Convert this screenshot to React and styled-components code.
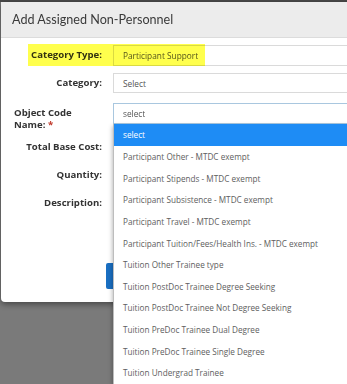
import React from 'react'
import styled, { createGlobalStyle } from 'styled-components'

const GlobalStyle = createGlobalStyle`
  html, body {
    margin: 0;
    padding: 0;
    width: 347px;
    height: 384px;
    overflow: hidden;
    background: #7a7a7a;
    font-family: "Open Sans", "Liberation Sans", sans-serif;
  }
`

const Page = styled.div`
  height: 384px;
  border-top: 2px solid #4a4a4a;
  box-sizing: border-box;
  padding-left: 1px;
`

const Modal = styled.div`
  width: 380px;
  height: 300px;
  background: #fff;
  border-radius: 0 0 4px 4px;
  box-shadow: 0 2px 6px rgba(0, 0, 0, 0.45);
`

const Header = styled.div`
  height: 36px;
  background: #ececec;
  border-bottom: 1px solid #dcdcdc;
  display: flex;
  align-items: center;
  padding-left: 11px;
  font-family: "Lato", "Liberation Sans", sans-serif;
  font-size: 12.6px;
  color: #3a3a3a;
  box-sizing: border-box;
`

const Body = styled.div`
  padding: 6px 0 0 13px;
  display: flex;
  flex-direction: column;
`

const Row = styled.div`
  position: relative;
  display: flex;
  align-items: ${p => (p.top ? 'flex-start' : 'center')};
  gap: 11px;
  height: ${p => p.h}px;
  margin-bottom: ${p => p.mb}px;
`

const Highlight = styled.div`
  position: absolute;
  left: 14px;
  top: 0;
  width: 177px;
  height: 22px;
  background: #ffff4d;
  mix-blend-mode: multiply;
  pointer-events: none;
`

const Label = styled.div`
  width: 88px;
  flex: none;
  text-align: ${p => (p.left ? 'left' : 'right')};
  font-weight: 700;
  font-size: 9.6px;
  line-height: 11.5px;
  color: #333;
  margin-top: ${p => (p.left ? 4 : 0)}px;
`

const Required = styled.span`
  color: #c0392b;
`

const Field = styled.div`
  position: relative;
  flex: 1;
  align-self: ${p => (p.top ? 'flex-start' : 'center')};
`

const Input = styled.div`
  height: ${p => p.h}px;
  border: 1px solid ${p => (p.focus ? '#a9c7df' : '#dadada')};
  background: #fff;
  box-sizing: border-box;
  display: flex;
  align-items: center;
  padding-left: 9px;
  font-size: 8.3px;
  color: #555;
`

const Menu = styled.ul`
  position: absolute;
  left: 0;
  top: 100%;
  width: 260px;
  margin: 0;
  padding: 0;
  list-style: none;
  background: #fff;
  border-left: 1px solid #bdbdbd;
  box-shadow: -1px 2px 4px rgba(0, 0, 0, 0.25);
`

const Item = styled.li`
  height: 21.65px;
  display: flex;
  align-items: center;
  padding-left: 9px;
  font-size: 8.2px;
  color: ${p => (p.active ? '#fff' : '#5e5e5e')};
  background: ${p => (p.active ? '#1e8cf5' : '#fff')};
  white-space: nowrap;
`

const Button = styled.div`
  width: 60px;
  height: 26px;
  margin: 50px 0 0 92px;
  background: #1a6fc2;
  border-radius: 2px;
`

const options = [
  'Participant Other - MTDC exempt',
  'Participant Stipends - MTDC exempt',
  'Participant Subsistence - MTDC exempt',
  'Participant Travel - MTDC exempt',
  'Participant Tuition/Fees/Health Ins. - MTDC exempt',
  'Tuition Other Trainee type',
  'Tuition PostDoc Trainee Degree Seeking',
  'Tuition PostDoc Trainee Not Degree Seeking',
  'Tuition PreDoc Trainee Dual Degree',
  'Tuition PreDoc Trainee Single Degree',
  'Tuition Undergrad Trainee',
]

export default function App() {
  return (
    <>
      <GlobalStyle />
      <Page>
        <Modal>
          <Header>Add Assigned Non-Personnel</Header>
          <Body>
            <Row h={22} mb={7}>
              <Label>Category Type:</Label>
              <Field>
                <Input h={21}>Participant Support</Input>
              </Field>
              <Highlight />
            </Row>
            <Row h={20} mb={10}>
              <Label>Category:</Label>
              <Field>
                <Input h={20}>Select</Input>
              </Field>
            </Row>
            <Row h={30} mb={4} top style={{ zIndex: 2 }}>
              <Label left>
                Object Code
                <br />
                Name: <Required>*</Required>
              </Label>
              <Field top>
                <Input h={21} focus>select</Input>
                <Menu>
                  <Item active>select</Item>
                  {options.map(o => (
                    <Item key={o}>{o}</Item>
                  ))}
                </Menu>
              </Field>
            </Row>
            <Row h={20} mb={8}>
              <Label>Total Base Cost:</Label>
              <Field />
            </Row>
            <Row h={20} mb={8}>
              <Label>Quantity:</Label>
              <Field />
            </Row>
            <Row h={20} mb={0}>
              <Label>Description:</Label>
              <Field />
            </Row>
            <Button />
          </Body>
        </Modal>
      </Page>
    </>
  )
}
